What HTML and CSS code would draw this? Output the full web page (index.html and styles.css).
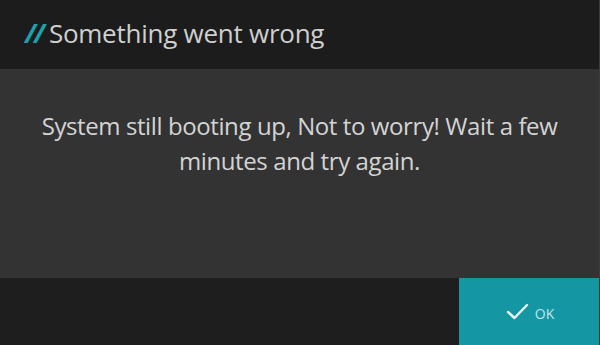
FILE: index.html
```html
<!DOCTYPE html>
<html>
<head>
<meta charset="utf-8">
<link rel="stylesheet" href="styles.css">
</head>
<body>
<div class="dialog">
  <header class="dialog-header">
    <span class="slashes">//</span><span class="title">Something went wrong</span>
  </header>
  <main class="dialog-body">
    <p class="message">System still booting up, Not to worry! Wait a few minutes and try again.</p>
  </main>
  <footer class="dialog-footer">
    <button class="ok-btn">
      <svg class="check" width="23" height="17" viewBox="0 0 23 17"><path d="M2 9 L8.5 15 L21 2" fill="none" stroke="#e6f4f5" stroke-width="2.4" stroke-linecap="round" stroke-linejoin="round"/></svg>
      <span class="ok-label">OK</span>
    </button>
  </footer>
</div>
</body>
</html>
```
FILE: styles.css
```css
* { box-sizing: border-box; }
html, body { margin: 0; padding: 0; }
body {
  width: 600px;
  height: 345px;
  overflow: hidden;
  background: #1e1e1e;
  font-family: "Open Sans", "Noto Sans", sans-serif;
}
.dialog {
  display: flex;
  flex-direction: column;
  width: 600px;
  height: 345px;
  border-right: 1px solid #3c3c3c;
}
.dialog-header {
  height: 69px;
  background: #1c1c1c;
  display: flex;
  align-items: center;
  padding-left: 25px;
  padding-bottom: 3px;
  font-size: 26px;
  color: #cfcfcf;
}
.title {
  letter-spacing: -0.25px;
}
.slashes {
  color: #1aa3ad;
  font-weight: 700;
  font-style: italic;
  letter-spacing: -2px;
  margin-right: 6px;
}
.dialog-body {
  height: 209px;
  background: #333333;
  display: flex;
  justify-content: center;
  padding-top: 39px;
}
.message {
  margin: 0;
  width: 540px;
  text-align: center;
  font-size: 24px;
  line-height: 35px;
  letter-spacing: -0.4px;
  color: #d4d4d4;
}
.dialog-footer {
  flex: 1;
  background: #1e1e1e;
  display: flex;
  justify-content: flex-end;
}
.ok-btn {
  width: 140px;
  height: 100%;
  border: none;
  background: #1597a3;
  display: flex;
  align-items: center;
  justify-content: center;
  gap: 6px;
  padding: 0 0 0 2px;
  font-family: inherit;
  cursor: pointer;
}
.ok-label {
  font-size: 14px;
  color: #bfe6ea;
  margin-top: 3px;
}
```
